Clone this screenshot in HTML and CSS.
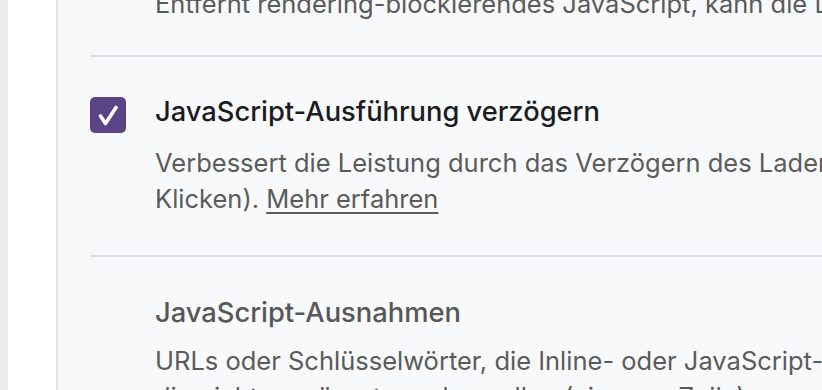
FILE: index.html
```html
<!DOCTYPE html>
<html lang="de">

<head>
    <meta charset="UTF-8">
    <meta name="viewport" content="width=device-width, initial-scale=1.0">
    <title>JavaScript-Einstellungen</title>
    <link rel="stylesheet" href="styles.css">
</head>

<body>

    <div class="seite">
        <div class="leiste"></div>
        <div class="menu"></div>

        <div class="inhalt">
            <div class="liste">

                <div class="eintrag eintrag-oben">
                    <div class="platz"></div>
                    <div class="texte">
                        <p class="beschreibung">Entfernt rendering-blockierendes JavaScript, kann die Ladezeit der Seite verbessern.</p>
                    </div>
                </div>

                <div class="eintrag">
                    <label class="kasten">
                        <input type="checkbox" checked>
                        <span class="haken">
                            <svg viewBox="0 0 36 36" width="36" height="36">
                                <path d="M10.5 19l5 7.5 10.5-16" fill="none" stroke="#fff" stroke-width="3.6"
                                    stroke-linecap="round" stroke-linejoin="round" />
                            </svg>
                        </span>
                    </label>
                    <div class="texte">
                        <h3 class="titel">JavaScript-Ausführung verzögern</h3>
                        <p class="beschreibung">Verbessert die Leistung durch das Verzögern des Ladens von JavaScript bis zur Benutzerinteraktion (Scrollen,<br>Klicken). <a href="#" class="mehr">Mehr erfahren</a></p>
                    </div>
                </div>

                <div class="eintrag">
                    <div class="platz"></div>
                    <div class="texte">
                        <h3 class="titel titel-grau">JavaScript-Ausnahmen</h3>
                        <p class="beschreibung">URLs oder Schlüsselwörter, die Inline- oder JavaScript-Dateien angeben,<br>die nicht verzögert werden sollen (eine pro Zeile).</p>
                    </div>
                </div>

            </div>
        </div>
    </div>

</body>

</html>
```

FILE: styles.css
```css
* {
    margin: 0;
    padding: 0;
    box-sizing: border-box;
    font-family: 'Inter', 'Noto Sans', sans-serif;
}

body {
    width: 822px;
    height: 390px;
    overflow: hidden;
    background-color: #f8f9fa;
}

.seite {
    display: flex;
    height: 390px;
}

.leiste {
    width: 8px;
    flex-shrink: 0;
    background-color: #ececec;
}

.menu {
    width: 50px;
    flex-shrink: 0;
    background-color: #ffffff;
    border-right: 2px solid #e3e5ea;
}

.inhalt {
    flex: 1;
    background-color: #f8f9fa;
    padding-left: 32px;
    overflow: hidden;
}

.liste {
    width: 1600px;
    margin-top: -14px;
}

.eintrag {
    display: flex;
    gap: 29px;
    padding: 37px 0 38px;
    border-bottom: 2px solid #dddee3;
}

.eintrag-oben {
    padding-top: 0;
    padding-bottom: 33px;
}

.eintrag:last-child {
    border-bottom: none;
    padding-top: 38px;
}

.platz {
    width: 36px;
    flex-shrink: 0;
}

.kasten {
    width: 36px;
    height: 36px;
    flex-shrink: 0;
    margin-top: 3px;
    cursor: pointer;
}

.kasten input {
    display: none;
}

.haken {
    display: block;
    width: 36px;
    height: 36px;
    border-radius: 5px;
    background-color: #5c4586;
}

.haken svg {
    display: block;
}

.texte {
    flex: 1;
}

.titel {
    font-size: 27.3px;
    line-height: 36px;
    font-weight: 500;
    color: #1c1c1e;
    margin-bottom: 15px;
}

.titel-grau {
    color: #575757;
    margin-bottom: 12px;
}

.beschreibung {
    font-size: 25.5px;
    line-height: 36px;
    color: #5b5b5b;
    white-space: nowrap;
}

.mehr {
    color: #5b5b5b;
    text-underline-offset: 4px;
    text-decoration-thickness: 2px;
}
```
